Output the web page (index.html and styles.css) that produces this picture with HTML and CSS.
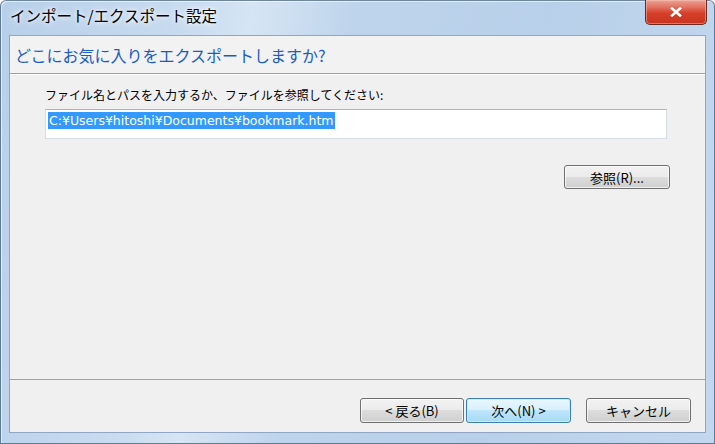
FILE: index.html
```html
<!DOCTYPE html>
<html lang="ja">
<head>
<meta charset="utf-8">
<title>インポート/エクスポート設定</title>
<link rel="stylesheet" href="styles.css">
</head>
<body>
<div class="window">
  <div class="titlebar">
    <span class="title">インポート/エクスポート設定</span>
    <div class="close">
      <svg width="12" height="10" viewBox="0 0 12 10"><path d="M2 1.5 L10 8.5 M10 1.5 L2 8.5" stroke="#fff" stroke-width="2.6" stroke-linecap="square"/></svg>
    </div>
  </div>
  <div class="panel">
    <div class="header">
      <h1 class="heading">どこにお気に入りをエクスポートしますか?</h1>
    </div>
    <div class="body">
      <label class="label">ファイル名とパスを入力するか、ファイルを参照してください:</label>
      <div class="input"><span class="sel">C:¥Users¥hitoshi¥Documents¥bookmark.htm</span></div>
      <div class="browse-row"><button class="btn browse">参照(R)...</button></div>
    </div>
    <div class="footer">
      <div class="pair">
        <button class="btn">&lt; 戻る(B)</button>
        <button class="btn default">次へ(N) &gt;</button>
      </div>
      <button class="btn">キャンセル</button>
    </div>
  </div>
</div>
</body>
</html>
```
FILE: styles.css
```css
html, body {
  margin: 0;
  padding: 0;
  width: 715px;
  height: 444px;
  overflow: hidden;
  background: #ffffff;
}
body {
  font-family: "Noto Sans CJK JP", "Noto Sans", sans-serif;
}
.window {
  box-sizing: border-box;
  width: 715px;
  height: 444px;
  display: flex;
  flex-direction: column;
  padding: 0 8px 10px 8px;
  border: 1px solid #5f7a98;
  border-top-color: #6f87a3;
  border-radius: 6px 6px 0 0;
  background: linear-gradient(100deg, #b7cfe9 0%, #c9dcf0 25%, #d6e5f4 32%, #bed4ec 45%, #b9d0ea 70%, #c3d8ee 100%);
  box-shadow: inset 1px 1px 0 rgba(255,255,255,0.6);
}
.titlebar {
  height: 34px;
  display: flex;
  align-items: flex-start;
  flex-shrink: 0;
}
.title {
  margin-top: 4px;
  margin-left: 1px;
  font-size: 15.5px;
  line-height: 20px;
  color: #000;
  text-shadow: 0 0 8px #ffffff, 0 0 4px #ffffff;
}
.close {
  margin-left: auto;
  margin-right: -1px;
  margin-top: -1px;
  width: 62px;
  height: 25px;
  box-sizing: border-box;
  border: 1px solid #6e2a22;
  border-top: none;
  border-radius: 0 0 5px 5px;
  background: linear-gradient(#eaa597 0%, #e27060 30%, #d6402a 55%, #c93420 100%);
  box-shadow: inset 0 0 0 1px rgba(255,200,190,0.45);
  display: flex;
  align-items: center;
  justify-content: center;
}
.panel {
  flex: 1;
  display: flex;
  flex-direction: column;
  background: #f0f0f0;
  border: 1px solid #8fa7c3;
}
.header {
  height: 37px;
  flex-shrink: 0;
  display: flex;
  align-items: center;
  border-bottom: 1px solid #a0a0a0;
  box-shadow: 0 1px 0 #ffffff;
  background: #f2f2f2;
}
.heading {
  margin: 0 0 0 5px;
  font-size: 16px;
  font-weight: normal;
  color: #1a5dc2;
  line-height: 22px;
}
.body {
  flex: 1;
  display: flex;
  flex-direction: column;
  padding: 13px 35px 0 35px;
}
.label {
  font-size: 12px;
  line-height: 16px;
  color: #000;
  margin-bottom: 6px;
}
.input {
  box-sizing: border-box;
  height: 30px;
  margin-right: 3px;
  background: #fff;
  border: 1px solid #d6dde6;
  border-top-color: #abb6c4;
  padding: 2px 0 0 2px;
  display: flex;
  align-items: flex-start;
}
.sel {
  background: #3399ff;
  color: #fff;
  font-family: "DejaVu Sans", "Noto Sans CJK JP", sans-serif;
  font-size: 12.5px;
  line-height: 17px;
  padding: 0 1px;
}
.browse-row {
  display: flex;
  justify-content: flex-end;
  margin-top: 26px;
}
.btn {
  box-sizing: border-box;
  width: 104px;
  height: 25px;
  font-family: inherit;
  font-size: 13px;
  color: #000;
  border: 1px solid #707070;
  border-radius: 3px;
  background: linear-gradient(#f2f2f2 0%, #ebebeb 49%, #dddddd 50%, #cfcfcf 100%);
  box-shadow: inset 0 0 0 1px rgba(255,255,255,0.7);
  padding: 0;
}
.browse {
  width: 106px;
  height: 24px;
}
.btn.default {
  border-color: #3c7fb1;
  background: linear-gradient(#eaf6fd 0%, #d9f0fc 49%, #bee6fd 50%, #a7d9f5 100%);
  box-shadow: inset 0 0 0 1px #c5ecff;
}
.footer {
  height: 53px;
  flex-shrink: 0;
  display: flex;
  align-items: flex-start;
  justify-content: flex-end;
  gap: 15px;
  padding: 18px 14px 0 0;
  box-sizing: border-box;
  border-top: 1px solid #a0a0a0;
}
.pair {
  display: flex;
  gap: 2px;
}
.footer .btn:last-child {
  width: 105px;
}
```
